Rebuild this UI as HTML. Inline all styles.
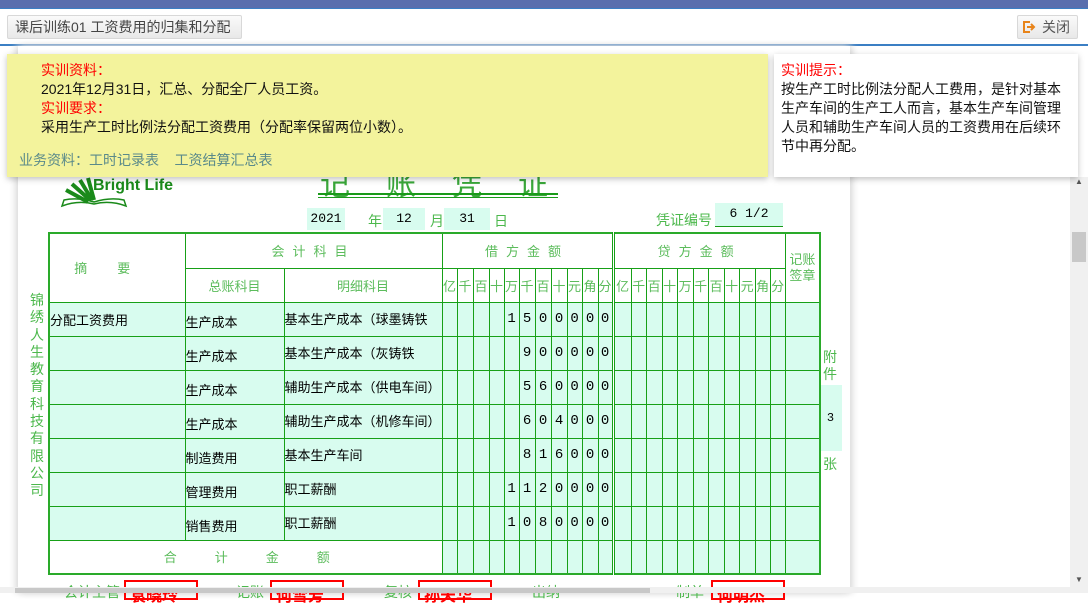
<!DOCTYPE html>
<html><head><meta charset="utf-8">
<style>
*{margin:0;padding:0;box-sizing:border-box}
body{width:1088px;height:593px;overflow:hidden;background:#fff;font-family:"Liberation Sans","Noto Sans CJK SC",sans-serif;position:relative;font-size:13px}
.abs{position:absolute}
.g{color:#4cb84c}
table{border-collapse:collapse;table-layout:fixed;position:absolute;left:48px;top:232px;width:771px}
td{border:1px solid #17a017;padding:0;font-size:13px;overflow:hidden;white-space:nowrap}
.h{color:#5cbc5c;text-align:center;background:#fff}
.d td{background:#d8fcef;height:34px;vertical-align:middle}
.n{text-align:center;font-family:"Liberation Mono",monospace;font-size:14px}
.dbl{border-left:3px double #17a017}
.red{border:2px solid #f00;color:#f00;font-size:16px;font-weight:bold;padding:0 4px;position:absolute;top:580px;height:20px}
</style></head><body>
<div class="abs" style="left:0;top:0;width:1088px;height:8px;background:#5a6fae"></div>
<div class="abs" style="left:0;top:8px;width:1088px;height:1px;background:#3b7fc4"></div>
<div class="abs" style="left:7px;top:15px;width:235px;height:24px;border:1px solid #d8d8d8;border-radius:2px;background:linear-gradient(#fafafa,#e8e8e8);color:#444;font-size:14px;line-height:22px;padding-left:7px">课后训练01 工资费用的归集和分配</div>
<div class="abs" style="left:1017px;top:15px;width:61px;height:24px;border:1px solid #d8d8d8;border-radius:2px;background:linear-gradient(#fafafa,#e8e8e8);color:#555;font-size:14px;line-height:22px;padding-left:24px">关闭</div>
<svg class="abs" style="left:1022px;top:20px" width="14" height="14"><path d="M8 2H2v10h6" fill="none" stroke="#e8841a" stroke-width="2"/><path d="M5 7h7M9 4l3 3-3 3" fill="none" stroke="#e8841a" stroke-width="2"/></svg>
<div class="abs" style="left:0;top:44px;width:1088px;height:2px;background:#3b7fc4"></div>

<div class="abs" style="left:18px;top:46px;width:832px;height:547px;background:#fff;box-shadow:-3px 0 6px #ddd,3px 0 6px #ddd"></div>
<div class="abs" style="left:1070px;top:177px;width:18px;height:416px;background:#f0f0f0"></div>
<div class="abs" style="left:1072px;top:232px;width:14px;height:30px;background:#c8c8c8"></div>
<div class="abs" style="left:1075px;top:177px;font-size:8px;color:#555">▲</div>
<div class="abs" style="left:1075px;top:575px;font-size:8px;color:#555">▼</div>

<svg class="abs" style="left:60px;top:176px" width="70" height="34"><path d="M20 4l12 20M12 8l18 16M6 14l22 12M28 2l6 22" stroke="#1a8a1a" stroke-width="4"/><path d="M2 30q16-6 32-2q16-4 32 2l-2-6q-14-3-30 2q-16-5-30-2z" fill="none" stroke="#1a8a1a" stroke-width="1.5"/></svg>
<div class="abs" style="left:93px;top:177px;color:#1a8a1a;font-weight:bold;font-size:16px">Bright Life</div>
<div class="abs g" style="left:320px;top:160px;font-size:30px;letter-spacing:36px;color:#3aa83a">记账凭证</div>
<div class="abs" style="left:318px;top:193px;width:240px;height:5px;border-top:2px solid #1a9a1a;border-bottom:1px solid #1a9a1a"></div>

<div class="abs n" style="left:307px;top:208px;width:38px;height:22px;background:#d8fcef;line-height:22px;font-size:13px">2021</div>
<div class="abs g" style="left:368px;top:211px;font-size:14px">年</div>
<div class="abs n" style="left:383px;top:208px;width:42px;height:22px;background:#d8fcef;line-height:22px;font-size:13px">12</div>
<div class="abs g" style="left:430px;top:211px;font-size:14px">月</div>
<div class="abs n" style="left:444px;top:208px;width:46px;height:22px;background:#d8fcef;line-height:22px;font-size:13px">31</div>
<div class="abs g" style="left:494px;top:211px;font-size:14px">日</div>
<div class="abs g" style="left:656px;top:210px;font-size:14px">凭证编号</div>
<div class="abs n" style="left:715px;top:203px;width:68px;height:24px;background:#d8fcef;line-height:22px;font-size:13px;border-bottom:1px solid #1a9a1a">6 1/2</div>

<div class="abs g" style="left:30px;top:292px;width:16px;font-size:14px;line-height:17.3px">锦绣人生教育科技有限公司</div>
<div class="abs g" style="left:823px;top:349px;width:16px;font-size:14px;line-height:17px">附件</div>
<div class="abs n" style="left:819px;top:385px;width:23px;height:66px;background:#d8fcef;line-height:66px;font-size:12px">3</div>
<div class="abs g" style="left:823px;top:454px;font-size:14px">张</div>

<table>
<colgroup><col style="width:136px"><col style="width:99px"><col style="width:158px">
<col style="width:15px"><col style="width:16px"><col style="width:16px"><col style="width:15px"><col style="width:15px"><col style="width:16px"><col style="width:16px"><col style="width:16px"><col style="width:15px"><col style="width:16px"><col style="width:15px">
<col style="width:18px"><col style="width:15px"><col style="width:16px"><col style="width:15px"><col style="width:16px"><col style="width:15px"><col style="width:16px"><col style="width:15px"><col style="width:16px"><col style="width:15px"><col style="width:15px">
<col style="width:35px"></colgroup>
<tr style="height:35px"><td class="h" rowspan="2" style="border-left:2px solid #2aaa2a;border-top:2px solid #2aaa2a;letter-spacing:30px">摘要</td><td class="h" colspan="2" style="border-top:2px solid #2aaa2a;letter-spacing:8px">会计科目</td><td class="h" colspan="11" style="border-top:2px solid #2aaa2a;letter-spacing:8px">借方金额</td><td class="h dbl" colspan="11" style="border-top:2px solid #2aaa2a;letter-spacing:8px">贷方金额</td><td class="h" rowspan="2" style="border-top:2px solid #2aaa2a;border-right:2px solid #2aaa2a;white-space:normal;vertical-align:top;padding-top:18px;line-height:16px">记账签章</td></tr>
<tr style="height:34px"><td class="h">总账科目</td><td class="h">明细科目</td>
<td class="h">亿</td><td class="h">千</td><td class="h">百</td><td class="h">十</td><td class="h">万</td><td class="h">千</td><td class="h">百</td><td class="h">十</td><td class="h">元</td><td class="h">角</td><td class="h">分</td>
<td class="h dbl">亿</td><td class="h">千</td><td class="h">百</td><td class="h">十</td><td class="h">万</td><td class="h">千</td><td class="h">百</td><td class="h">十</td><td class="h">元</td><td class="h">角</td><td class="h">分</td></tr>
<tbody class="d">
<tr><td style="border-left:2px solid #2aaa2a">分配工资费用</td><td style="padding-top:4px">生产成本</td><td style="vertical-align:top;padding-top:6px">基本生产成本（球墨铸铁</td><td></td><td></td><td></td><td></td><td class="n">1</td><td class="n">5</td><td class="n">0</td><td class="n">0</td><td class="n">0</td><td class="n">0</td><td class="n">0</td><td class="dbl"></td><td></td><td></td><td></td><td></td><td></td><td></td><td></td><td></td><td></td><td></td><td style="border-right:2px solid #2aaa2a"></td></tr>
<tr><td style="border-left:2px solid #2aaa2a"></td><td style="padding-top:4px">生产成本</td><td style="vertical-align:top;padding-top:6px">基本生产成本（灰铸铁</td><td></td><td></td><td></td><td></td><td></td><td class="n">9</td><td class="n">0</td><td class="n">0</td><td class="n">0</td><td class="n">0</td><td class="n">0</td><td class="dbl"></td><td></td><td></td><td></td><td></td><td></td><td></td><td></td><td></td><td></td><td></td><td style="border-right:2px solid #2aaa2a"></td></tr>
<tr><td style="border-left:2px solid #2aaa2a"></td><td style="padding-top:4px">生产成本</td><td style="vertical-align:top;padding-top:6px">辅助生产成本（供电车间）</td><td></td><td></td><td></td><td></td><td></td><td class="n">5</td><td class="n">6</td><td class="n">0</td><td class="n">0</td><td class="n">0</td><td class="n">0</td><td class="dbl"></td><td></td><td></td><td></td><td></td><td></td><td></td><td></td><td></td><td></td><td></td><td style="border-right:2px solid #2aaa2a"></td></tr>
<tr><td style="border-left:2px solid #2aaa2a"></td><td style="padding-top:4px">生产成本</td><td style="vertical-align:top;padding-top:6px">辅助生产成本（机修车间）</td><td></td><td></td><td></td><td></td><td></td><td class="n">6</td><td class="n">0</td><td class="n">4</td><td class="n">0</td><td class="n">0</td><td class="n">0</td><td class="dbl"></td><td></td><td></td><td></td><td></td><td></td><td></td><td></td><td></td><td></td><td></td><td style="border-right:2px solid #2aaa2a"></td></tr>
<tr><td style="border-left:2px solid #2aaa2a"></td><td style="padding-top:4px">制造费用</td><td style="vertical-align:top;padding-top:6px">基本生产车间</td><td></td><td></td><td></td><td></td><td></td><td class="n">8</td><td class="n">1</td><td class="n">6</td><td class="n">0</td><td class="n">0</td><td class="n">0</td><td class="dbl"></td><td></td><td></td><td></td><td></td><td></td><td></td><td></td><td></td><td></td><td></td><td style="border-right:2px solid #2aaa2a"></td></tr>
<tr><td style="border-left:2px solid #2aaa2a"></td><td style="padding-top:4px">管理费用</td><td style="vertical-align:top;padding-top:6px">职工薪酬</td><td></td><td></td><td></td><td></td><td class="n">1</td><td class="n">1</td><td class="n">2</td><td class="n">0</td><td class="n">0</td><td class="n">0</td><td class="n">0</td><td class="dbl"></td><td></td><td></td><td></td><td></td><td></td><td></td><td></td><td></td><td></td><td></td><td style="border-right:2px solid #2aaa2a"></td></tr>
<tr><td style="border-left:2px solid #2aaa2a"></td><td style="padding-top:4px">销售费用</td><td style="vertical-align:top;padding-top:6px">职工薪酬</td><td></td><td></td><td></td><td></td><td class="n">1</td><td class="n">0</td><td class="n">8</td><td class="n">0</td><td class="n">0</td><td class="n">0</td><td class="n">0</td><td class="dbl"></td><td></td><td></td><td></td><td></td><td></td><td></td><td></td><td></td><td></td><td></td><td style="border-right:2px solid #2aaa2a"></td></tr>
<tr style="height:33px"><td class="h" colspan="3" style="background:#fff;border-left:2px solid #2aaa2a;border-bottom:2px solid #2aaa2a;letter-spacing:38px;padding-left:40px">合计金额</td><td style="border-bottom:2px solid #2aaa2a"></td><td style="border-bottom:2px solid #2aaa2a"></td><td style="border-bottom:2px solid #2aaa2a"></td><td style="border-bottom:2px solid #2aaa2a"></td><td style="border-bottom:2px solid #2aaa2a"></td><td style="border-bottom:2px solid #2aaa2a"></td><td style="border-bottom:2px solid #2aaa2a"></td><td style="border-bottom:2px solid #2aaa2a"></td><td style="border-bottom:2px solid #2aaa2a"></td><td style="border-bottom:2px solid #2aaa2a"></td><td style="border-bottom:2px solid #2aaa2a"></td><td class="dbl" style="border-bottom:2px solid #2aaa2a"></td><td style="border-bottom:2px solid #2aaa2a"></td><td style="border-bottom:2px solid #2aaa2a"></td><td style="border-bottom:2px solid #2aaa2a"></td><td style="border-bottom:2px solid #2aaa2a"></td><td style="border-bottom:2px solid #2aaa2a"></td><td style="border-bottom:2px solid #2aaa2a"></td><td style="border-bottom:2px solid #2aaa2a"></td><td style="border-bottom:2px solid #2aaa2a"></td><td style="border-bottom:2px solid #2aaa2a"></td><td style="border-bottom:2px solid #2aaa2a"></td><td style="border-bottom:2px solid #2aaa2a;border-right:2px solid #2aaa2a"></td></tr>
</tbody></table>

<div class="abs g" style="left:64px;top:582px;font-size:14px">会计主管</div>
<div class="red" style="left:124px;width:74px">袁晓玲</div>
<div class="abs g" style="left:236px;top:582px;font-size:14px">记账</div>
<div class="red" style="left:270px;width:74px">何雪芳</div>
<div class="abs g" style="left:384px;top:582px;font-size:14px">复核</div>
<div class="red" style="left:418px;width:74px">孙天华</div>
<div class="abs g" style="left:532px;top:582px;font-size:14px">出纳</div>
<div class="abs g" style="left:676px;top:582px;font-size:14px">制单</div>
<div class="red" style="left:711px;width:74px">何明杰</div>
<div class="abs" style="left:0;top:587px;width:1070px;height:6px;background:#f0f0f0"></div>
<div class="abs" style="left:15px;top:588px;width:635px;height:5px;background:#c8c8c8"></div>

<div class="abs" style="left:7px;top:54px;width:761px;height:123px;background:#f3f39c;box-shadow:0 2px 6px rgba(0,0,0,.25);font-size:14px;line-height:19px;padding:7px 0 0 34px">
<div style="color:#f00">实训资料：</div>
<div style="color:#111">2021年12月31日，汇总、分配全厂人员工资。</div>
<div style="color:#f00">实训要求：</div>
<div style="color:#111">采用生产工时比例法分配工资费用（分配率保留两位小数）。</div>
<div style="color:#5a8a8a;margin:14px 0 0 -22px">业务资料：工时记录表&nbsp;&nbsp;&nbsp;&nbsp;工资结算汇总表</div>
</div>
<div class="abs" style="left:774px;top:54px;width:304px;height:123px;background:#fff;box-shadow:0 2px 6px rgba(0,0,0,.25);font-size:14px;line-height:19px;padding:7px 6px 0 7px;color:#111">
<div style="color:#f00">实训提示：</div>
按生产工时比例法分配人工费用，是针对基本生产车间的生产工人而言，基本生产车间管理人员和辅助生产车间人员的工资费用在后续环节中再分配。
</div>
</body></html>
